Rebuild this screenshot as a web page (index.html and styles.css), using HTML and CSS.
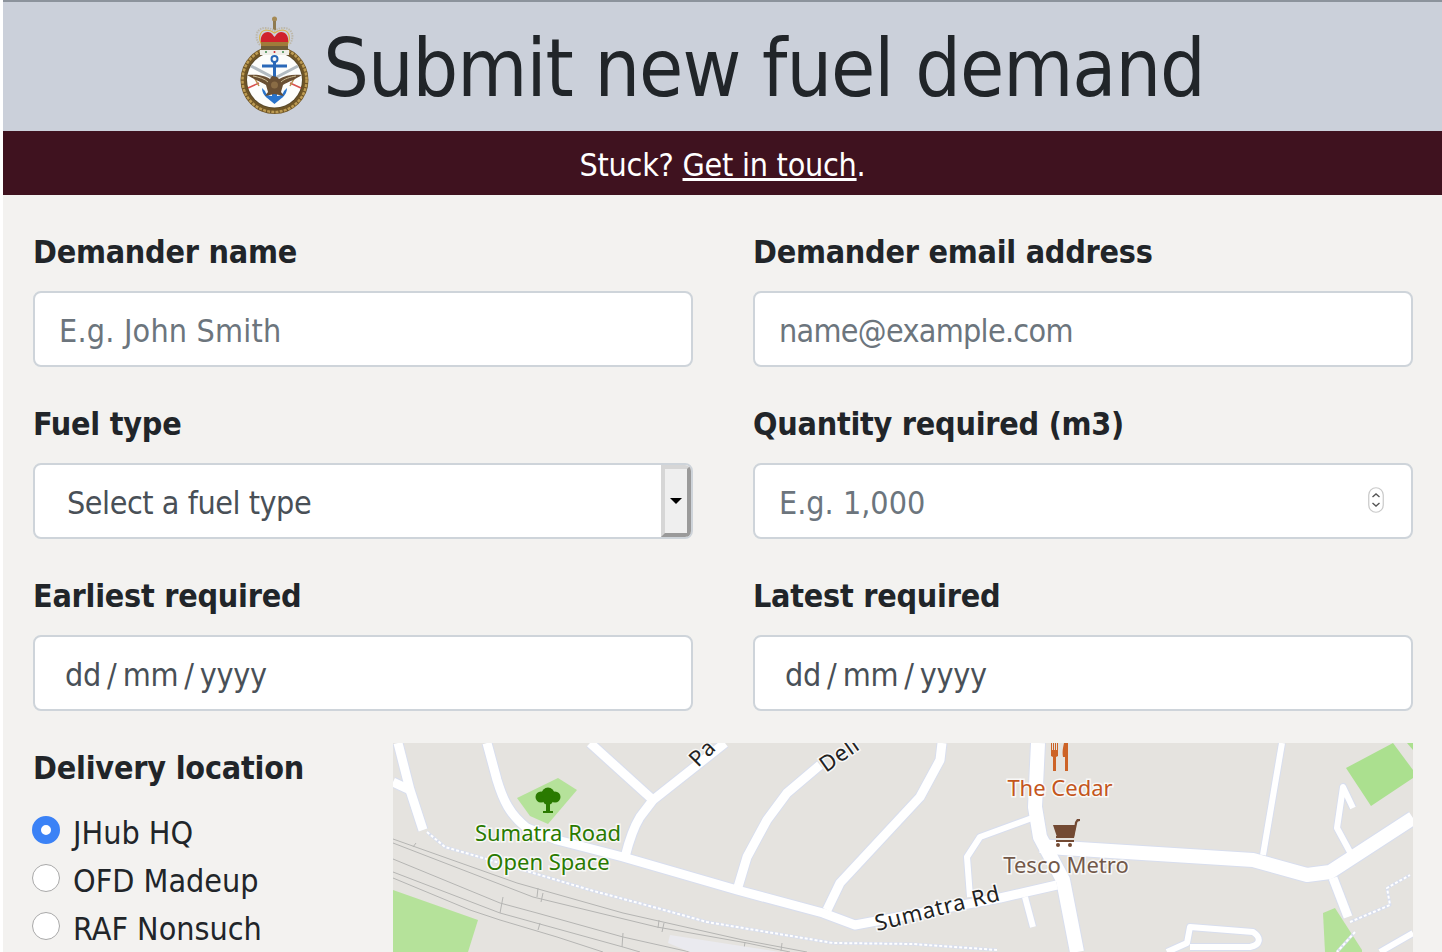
FILE: index.html
```html
<!DOCTYPE html>
<html lang="en">
<head>
  <meta charset="UTF-8">
  <meta name="viewport" content="width=device-width, initial-scale=1.0">
  <title>Submit new fuel demand</title>
  <link rel="stylesheet" href="styles.css">
</head>
<body>
  <header class="page-header">
    <svg class="crest" viewBox="0 0 70 100" width="70" height="100" aria-hidden="true">
      <!-- wreath and white field -->
      <circle cx="34.500" cy="65" r="34" fill="#6f5526"/>
      <circle cx="34.500" cy="65" r="32" fill="none" stroke="#bd9b52" stroke-width="2.500" stroke-dasharray="3 1.200"/>
      <circle cx="34.500" cy="65" r="28.500" fill="#5a4a2c"/>
      <circle cx="34.500" cy="65" r="27.500" fill="#fdfdfb"/>
      <!-- crown -->
      <circle cx="34.500" cy="4" r="2.500" fill="#a58a55"/>
      <rect x="33" y="6" width="3" height="9" fill="#8f7a50"/>
      <path d="M20 30 C14 23 16 13 25 13 C29 13 32 14 34.500 16 C37 14 40 13 44 13 C53 13 55 23 49 30" fill="none" stroke="#bdb8ab" stroke-width="2" stroke-dasharray="1.500 1"/>
      <path d="M22 30 C18 24 19 16 26 15 C30 15 32 16 34.500 18 C37 16 39 15 43 15 C50 16 51 24 47 30" fill="none" stroke="#d9b64a" stroke-width="1.200"/>
      <path d="M21 28 C20 21 23 17 28 17 C31 17 33 20 34.500 22 C36 20 38 17 41 17 C46 17 49 21 48 28 Z" fill="#d0222c"/>
      <rect x="21" y="27" width="27" height="4" fill="#a07b3a"/>
      <rect x="21" y="31" width="27" height="4" fill="#6e5c38"/>
      <rect x="20" y="35" width="29" height="5" fill="#efeee8"/>
      <circle cx="26" cy="37" r="1" fill="#3c8a4c"/>
      <circle cx="43" cy="37" r="1" fill="#3c8a4c"/>
      <circle cx="34.500" cy="37" r="1" fill="#c9242d"/>
      <!-- lower swords -->
      <path d="M8 73 L19 68 M61 73 L50 68" stroke="#d8524e" stroke-width="1.500"/>
      <path d="M19 71 L14 62 M50 71 L55 62" stroke="#b7924e" stroke-width="1.500"/>
      <!-- upper swords -->
      <path d="M11 51 L34 63 M58 51 L35 63" stroke="#b3bbc1" stroke-width="3"/>
      <!-- anchor -->
      <circle cx="34.500" cy="44" r="3" fill="none" stroke="#2a68b8" stroke-width="2"/>
      <path d="M34.500 47 V62 M22 51 H47" stroke="#2a68b8" stroke-width="3" fill="none"/>
      <path d="M22 73 C22 81 29 84 34.500 89 C40 84 47 81 47 73 L44 76 C43 80 39 81 37 81 V74 H32 V81 C30 81 26 80 25 76 Z" fill="#2a74cc"/>
      <!-- eagle -->
      <path d="M7 60 C15 59 25 60 30 64 L32 61 L37 62 L39 64 C45 60 54 59 62 60 C56 64 48 67 43 70 L41 77 L44 81 L34.500 79 L25 81 L28 77 L26 70 C21 67 13 64 7 60 Z" fill="#6a4f33"/>
      <path d="M13 61 C19 62 25 64 28 67 M56 61 C50 62 44 64 41 67" stroke="#cdbd93" stroke-width="1" fill="none"/>
      <circle cx="34.500" cy="70" r="3.500" fill="#8a6c45"/>
    </svg>
    <h1>Submit new fuel demand</h1>
  </header>

  <div class="help-bar">Stuck? <a href="#">Get in touch</a>.</div>

  <form class="demand-form">
    <div class="form-row">
      <div class="field">
        <label for="name">Demander name</label>
        <input class="form-control wide-text" type="text" id="name" placeholder="E.g. John Smith">
      </div>
      <div class="field">
        <label for="email">Demander email address</label>
        <input class="form-control narrow-text" type="text" id="email" placeholder="name@example.com">
      </div>
    </div>
    <div class="form-row">
      <div class="field">
        <label>Fuel type</label>
        <div class="form-control select-box">
          <span class="select-text">Select a fuel type</span>
          <span class="select-btn"><span class="select-arrow"></span></span>
        </div>
      </div>
      <div class="field">
        <label for="qty">Quantity required (m3)</label>
        <div class="number-wrap">
          <input class="form-control" type="text" id="qty" placeholder="E.g. 1,000">
          <svg class="spinner" viewBox="0 0 16 26" width="16" height="26" aria-hidden="true">
            <rect x="0.750" y="0.750" width="14.500" height="24.500" rx="7.250" fill="#fff" stroke="#c9c9c9" stroke-width="1.200"/>
            <path d="M4.500 10 L8 7 L11.500 10 M4.500 16 L8 19 L11.500 16" fill="none" stroke="#555" stroke-width="1.400"/>
          </svg>
        </div>
      </div>
    </div>
    <div class="form-row">
      <div class="field">
        <label>Earliest required</label>
        <div class="form-control date-box">dd / mm / yyyy</div>
      </div>
      <div class="field">
        <label>Latest required</label>
        <div class="form-control date-box">dd / mm / yyyy</div>
      </div>
    </div>

    <div class="location-row">
      <div class="location-list">
        <div class="location-title">Delivery location</div>
        <label class="radio-row"><span class="radio radio-on"></span>JHub HQ</label>
        <label class="radio-row"><span class="radio"></span>OFD Madeup</label>
        <label class="radio-row"><span class="radio"></span>RAF Nonsuch</label>
      </div>
      <svg class="map" viewBox="393 743 1020 209" width="1020" height="209">
        <rect x="393" y="743" width="1020" height="209" fill="#e5e3df"/>
        <!-- parks -->
        <path d="M393 890 L478 920 L468 952 L393 952 Z" fill="#b5e29a"/>
        <path d="M517 798 L558 778 L577 790 L548 824 L530 816 Z" fill="#b5e29a"/>
        <path d="M1346 768 L1393 743 L1413 770 L1413 778 L1371 806 Z" fill="#abe08f"/>
        <path d="M1407 743 H1413 V750 Z" fill="#abe08f"/>
        <path d="M1323 913 L1335 908 L1362 950 L1362 952 L1325 952 Z" fill="#b5e29a"/>
        <!-- railway -->
        <g class="rail">
          <path d="M393 839 L517 883 L623 913 L743 940 L807 952"/>
          <path d="M393 843 L533 897 L657 927 L747 943 L790 952"/>
          <path d="M393 859 L500 903 L537 913 L623 937 L690 952"/>
          <path d="M393 872 L500 913 L623 947 L640 952"/>
          <path d="M393 878 L470 910 L500 920 L557 937 L603 952"/>
        </g>
        <path class="rail-tick" d="M413 847 L416 843 M538 888 L537 897 M543 893 L541 902 M503 897 L500 913 M540 923 L538 930 M623 933 L622 947 M659 920 L658 928 M664 923 L662 932 M745 942 L744 949 M782 943 L781 951"/>
        <!-- building -->
        <path d="M670 935 L780 952 L690 952 L668 943 Z" fill="#eaeaef"/>
        <!-- roads: casing then fill -->
        <g class="road-case">
          <path d="M398 743 L410 790 L423 830"/><path d="M393 782 L410 790"/>
          <path d="M487 743 L497 780 C503 800 510 815 527 828 L557 840 L623 857 L737 890 L823 913 L855 925 L1000 898 L1057 885"/>
          <path d="M590 743 L653 800"/><path d="M725 743 L653 800 L640 817 C632 830 628 845 625 857"/>
          <path d="M820 765 L787 793 L767 820 L747 857 L738 887"/><path d="M942 743 L940 760 L920 797 L840 883 L827 910"/>
          <path class="road-wide" d="M1038 743 L1035 807 L1040 837 L1063 880 L1077 952"/>
          <path class="road-wide" d="M1040 846 L1063 848 L1253 860 L1307 875 L1330 872 L1413 818"/>
          <path class="road-thin" d="M1032 818 L980 837 L967 857 L970 897"/>
          <path class="road-thin" d="M1282 743 L1263 855"/>
          <path d="M1333 878 L1348 917"/>
          <path class="road-thin" d="M1025 897 L1033 927"/>
          <path class="road-thin" d="M1353 808 L1343 787 L1337 828 L1350 852"/>
          <path class="road-thin" d="M1167 952 L1187 943 L1190 927 L1253 932 C1262 938 1260 945 1250 947 L1190 947"/>
          <path class="road-thin" d="M1380 952 L1413 933"/>
        </g>
        <g class="road">
          <path d="M398 743 L410 790 L423 830"/><path d="M393 782 L410 790"/>
          <path d="M487 743 L497 780 C503 800 510 815 527 828 L557 840 L623 857 L737 890 L823 913 L855 925 L1000 898 L1057 885"/>
          <path d="M590 743 L653 800"/><path d="M725 743 L653 800 L640 817 C632 830 628 845 625 857"/>
          <path d="M820 765 L787 793 L767 820 L747 857 L738 887"/><path d="M942 743 L940 760 L920 797 L840 883 L827 910"/>
          <path class="road-wide" d="M1038 743 L1035 807 L1040 837 L1063 880 L1077 952"/>
          <path class="road-wide" d="M1040 846 L1063 848 L1253 860 L1307 875 L1330 872 L1413 818"/>
          <path class="road-thin" d="M1032 818 L980 837 L967 857 L970 897"/>
          <path class="road-thin" d="M1282 743 L1263 855"/>
          <path d="M1333 878 L1348 917"/>
          <path class="road-thin" d="M1025 897 L1033 927"/>
          <path class="road-thin" d="M1353 808 L1343 787 L1337 828 L1350 852"/>
          <path class="road-thin" d="M1167 952 L1187 943 L1190 927 L1253 932 C1262 938 1260 945 1250 947 L1190 947"/>
          <path class="road-thin" d="M1380 952 L1413 933"/>
        </g>
        <!-- paths -->
        <g class="foot-case">
          <path d="M427 832 L445 847 L483 858 L530 872 L590 890 L657 908 L707 922 L833 943 L913 944 L997 950"/>
          <path d="M1350 922 L1390 905 L1387 888 L1410 875"/>
          <path d="M1355 932 L1337 952"/>
        </g>
        <g class="foot">
          <path d="M427 832 L445 847 L483 858 L530 872 L590 890 L657 908 L707 922 L833 943 L913 944 L997 950"/>
          <path d="M1350 922 L1390 905 L1387 888 L1410 875"/>
          <path d="M1355 932 L1337 952"/>
        </g>
        <!-- pins -->
        <g fill="#2a7a00">
          <circle cx="541" cy="797" r="5.500"/><circle cx="555" cy="797" r="5.500"/><circle cx="548" cy="794" r="6.500"/><circle cx="548" cy="800" r="5"/>
          <path d="M546 800 H550 V811 H553 V813 H543 V811 H546 Z"/>
        </g>
        <g fill="#cd6327">
          <path d="M1051 743 V756 L1053 757 V771 H1056 V757 L1058 756 V743 H1057 V750 H1056 V743 H1055 V750 H1054 V743 H1053 V750 H1052 V743 Z"/>
          <path d="M1064 743 C1063 748 1062 752 1063 757 H1065 V771 H1068 V743 Z"/>
        </g>
        <g fill="#734a33">
          <path d="M1053 825 H1076 L1074 837 H1057 Z"/>
          <path d="M1056 838 H1074 L1077 824 C1077 822 1078 821 1080 821 V819 H1077 L1075 822 L1073 836 H1056 Z"/>
          <rect x="1056" y="840" width="18" height="2"/>
          <circle cx="1058" cy="845" r="2"/><circle cx="1070" cy="845" r="2"/>
        </g>
        <!-- labels -->
        <text class="map-label green" x="548" y="841" text-anchor="middle">Sumatra Road</text>
        <text class="map-label green" x="548" y="870" text-anchor="middle">Open Space</text>
        <text class="map-label orange" x="1060" y="796" text-anchor="middle">The Cedar</text>
        <text class="map-label brown" x="1066" y="873" text-anchor="middle">Tesco Metro</text>
        <text class="map-label road-name" transform="translate(877 931) rotate(-14)">Sumatra Rd</text>
        <text class="map-label road-name" transform="translate(698 768) rotate(-45)">Pa</text>
        <text class="map-label road-name" transform="translate(826 773) rotate(-35)">Deli</text>
      </svg>
    </div>
  </form>
</body>
</html>
```

FILE: styles.css
```css
* {
  box-sizing: border-box;
}
html {
  background: #fff;
}
body {
  margin: 0;
  height: 952px;
  padding-left: 3px;
  overflow: hidden;
  background: #f3f2f0;
  background-clip: content-box;
  font-family: "DejaVu Sans Condensed", "DejaVu Sans", sans-serif;
  font-stretch: condensed;
  font-size: 32px;
  line-height: 48px;
  color: #212529;
}
.page-header {
  display: flex;
  justify-content: center;
  align-items: center;
  gap: 13px;
  height: 131px;
  border-top: 2px solid #8c939c;
  background: #cbd0da;
}
h1 {
  margin: 5px 0 0;
  font-size: 80px;
  font-weight: 400;
  line-height: 96px;
  letter-spacing: -1px;
}
.crest {
  flex: none;
  margin-top: -3px;
}
.help-bar {
  height: 64px;
  padding-top: 10px;
  background: #3f121f;
  color: #fff;
  text-align: center;
  letter-spacing: -0.25px;
}
.help-bar a {
  color: #fff;
}
.demand-form {
  padding: 32px 29px 0 30px;
}
.form-row {
  display: flex;
  gap: 60px;
  margin-bottom: 32px;
}
.field {
  flex: 1;
}
.field > label {
  display: block;
  height: 48px;
  padding-top: 2px;
  margin-bottom: 16px;
  font-weight: 700;
  line-height: 46px;
  letter-spacing: -0.25px;
}
.form-control {
  display: block;
  width: 100%;
  height: 76px;
  padding: 14px 24px 10px;
  border: 2px solid #ced4da;
  border-radius: 8px;
  background: #fff;
  font: inherit;
  font-stretch: condensed;
  color: #495057;
}
.form-control::placeholder {
  color: #6c757d;
  opacity: 1;
}
.wide-text {
  letter-spacing: 0.2px;
}
.narrow-text {
  letter-spacing: -0.7px;
}
.select-box {
  display: flex;
  padding: 0;
  overflow: hidden;
}
.select-text {
  flex: 1;
  padding: 14px 0 0 32px;
  letter-spacing: -0.45px;
}
.select-btn {
  display: flex;
  align-items: center;
  justify-content: center;
  width: 30px;
  border-style: solid;
  border-width: 4px;
  border-color: #d6d6d6 #9a9a9a #9a9a9a #d6d6d6;
  background: #efefef;
}
.select-arrow {
  width: 0;
  height: 0;
  border-left: 6px solid transparent;
  border-right: 6px solid transparent;
  border-top: 6px solid #000;
}
.number-wrap {
  position: relative;
}
.spinner {
  position: absolute;
  top: 24px;
  right: 29px;
}
.date-box {
  padding-left: 30px;
  word-spacing: -2.7px;
  letter-spacing: -0.3px;
}
.location-row {
  display: flex;
}
.location-list {
  width: 360px;
  flex: none;
}
.location-title {
  height: 50px;
  padding-top: 2px;
  margin-bottom: 16px;
  font-weight: 700;
  line-height: 46px;
  letter-spacing: -0.2px;
}
.radio-row {
  display: flex;
  align-items: center;
  gap: 13px;
  height: 48px;
  margin-left: -1px;
}
.radio {
  flex: none;
  width: 28px;
  height: 28px;
  margin-top: -6px;
  border: 1px solid #a9a9a9;
  border-radius: 50%;
  background: #fff;
}
.radio-on {
  border: 9px solid #3b82f6;
}
.map {
  display: block;
  flex: none;
}
.road, .road-case, .rail, .rail-tick, .foot, .foot-case {
  fill: none;
  stroke-linejoin: round;
}
.road-case {
  stroke: #d8deee;
  stroke-width: 11;
}
.road {
  stroke: #fff;
  stroke-width: 9;
}
.road-case .road-wide {
  stroke-width: 16;
}
.road-case .road-thin {
  stroke-width: 8;
}
.road .road-wide {
  stroke-width: 14;
}
.road .road-thin {
  stroke-width: 6;
}
.rail, .rail-tick {
  stroke: #b5b5b3;
  stroke-width: 1;
}
.foot-case {
  stroke: #d8deee;
  stroke-width: 3;
}
.foot {
  stroke: #fff;
  stroke-width: 2;
  stroke-dasharray: 3 2;
}
.map-label {
  font-family: "Noto Sans", sans-serif;
  font-size: 22px;
  font-stretch: normal;
  paint-order: stroke;
  stroke: #fff;
  stroke-width: 3px;
  stroke-opacity: .75;
}
.green {
  fill: #2a7a00;
}
.orange {
  fill: #c4561c;
}
.brown {
  fill: #73594a;
}
.road-name {
  fill: #222;
  font-size: 22px;
  letter-spacing: 0.8px;
}
```
